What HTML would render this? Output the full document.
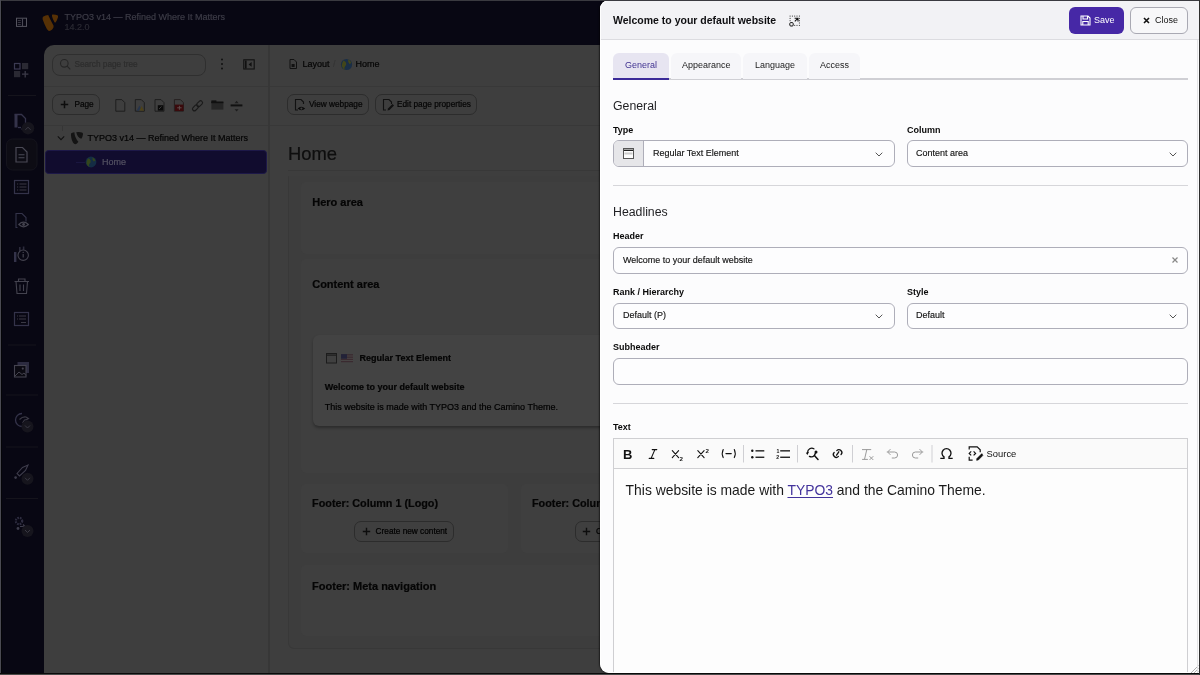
<!DOCTYPE html>
<html><head><meta charset="utf-8">
<style>
*{box-sizing:border-box;margin:0;padding:0}
html,body{width:1200px;height:675px;overflow:hidden}
#app,#modal{will-change:transform}
body{background:#47474d;font-family:"Liberation Sans",sans-serif;position:relative}
.a{position:absolute}
.t{position:absolute;white-space:nowrap;line-height:1}
#app{left:0;top:0;width:1200px;height:675px;background:#080713;overflow:hidden}
#content{left:44px;top:45px;width:1160px;height:640px;background:#3e3e3e;border-top-left-radius:10px}
.hl{position:absolute;height:1px;background:#383838}
.vl{position:absolute;width:1px;background:#373737}
.btnd{position:absolute;border:1px solid #2c2c2c;border-radius:7px}
.dk{color:#050505;-webkit-text-stroke:0.25px #050505}
#app .t{-webkit-text-stroke:0.2px currentColor}
#modal{left:600px;top:0;width:600px;height:673px;background:#fcfcfd;border-radius:9px 0 0 9px;overflow:hidden;box-shadow:-1px 0 1.5px rgba(0,0,0,0.55)}
#mhead{left:0;top:0;width:100%;height:40px;background:#f2f2f5;border-bottom:1px solid #dcdce0}
.lbl{position:absolute;font-weight:700;font-size:9.7px;line-height:1;color:#0a0a0a;white-space:nowrap;transform:scaleX(0.928);transform-origin:0 0;margin-top:-1.2px}
.inp{position:absolute;border:1px solid #aeaeb9;border-radius:6px;background:#fdfdfe}
.itx{position:absolute;font-size:9.7px;line-height:1;color:#111;white-space:nowrap;transform:scaleX(0.928);transform-origin:0 0;-webkit-text-stroke:0.15px #111;margin-top:-1.3px}
.sep{position:absolute;height:1px;background:#d6d6da}
.chev{position:absolute;width:6px;height:6px;border-right:1px solid #666;border-bottom:1px solid #666;transform:rotate(45deg)}
</style></head>
<body>
<div id="app" class="a">
  <div id="content" class="a"></div>
  <!-- topbar -->
  <svg class="a" style="left:0;top:0" width="44" height="675" viewBox="0 0 44 675">
    <g fill="none" stroke="#4a4955" stroke-width="1">
      <rect x="16.5" y="18.2" width="10" height="8.2" stroke="#55545f"/>
    </g>
    <path d="M22.5 18.5v8" stroke="#4a4955" stroke-width="1.1"/>
    <g fill="#3e3d48"><rect x="17.8" y="20" width="3" height="0.9"/><rect x="17.8" y="22" width="3" height="0.9"/><rect x="17.8" y="24" width="3" height="0.9"/></g>
    <!-- grid plus -->
    <rect x="14.5" y="63.5" width="5.5" height="5.5" fill="none" stroke="#3b3a52" stroke-width="1.2"/>
    <rect x="22" y="63" width="6.2" height="6.2" fill="#2a2933"/>
    <rect x="14" y="71" width="6.2" height="6.2" fill="#2a2933"/>
    <path d="M25.2 71v6.4M22 74.2h6.4" stroke="#3b3a48" stroke-width="1.3"/>
    <rect x="8" y="95" width="28" height="1" fill="#15141c"/>
    <!-- pages -->
    <path d="M14.5 114.5h7l4 4v10.5h-4" fill="none" stroke="#34334a" stroke-width="1.3"/>
    <rect x="14.5" y="114.5" width="3" height="13" fill="#34334a"/>
    <path d="M18 127.5h3" stroke="#34334a" stroke-width="1.3"/>
    <circle cx="28" cy="128.2" r="6.2" fill="#16151d"/>
    <path d="M25.4 129.8l2.6-2.6 2.6 2.6" fill="none" stroke="#3a3944" stroke-width="1"/>
    <rect x="6.5" y="139" width="30.5" height="31" rx="6" fill="#0d0c14" stroke="#15141d" stroke-width="1"/>
    <path d="M16 147.5h6.5l4.5 4.5v10h-11z" fill="none" stroke="#4a4955" stroke-width="1.2"/>
    <path d="M18.5 154.8h6M18.5 157.8h6" stroke="#4a4955" stroke-width="1.1"/>
    <!-- list -->
    <rect x="14.5" y="180.5" width="14" height="13" fill="none" stroke="#34334a" stroke-width="1.2"/>
    <path d="M17 184h1.2M19.5 184h7M17 187h1.2M19.5 187h7M17 190h1.2M19.5 190h7" stroke="#3a3944" stroke-width="1"/>
    <!-- page eye -->
    <path d="M17.5 227.5h-1.5v-14h6l4 4v4" fill="none" stroke="#34334a" stroke-width="1.1"/>
    <path d="M18.8 224.5q4.6-4.6 9.6 0q-4.8 4.6-9.6 0z" fill="none" stroke="#44434f" stroke-width="1.1"/>
    <circle cx="23.6" cy="224.5" r="1.4" fill="#44434f"/>
    <!-- info -->
    <rect x="14" y="252" width="2.4" height="10" fill="#34334a"/>
    <rect x="19" y="247" width="1.6" height="4" fill="#2c2b3c"/>
    <rect x="22.8" y="246.5" width="1.6" height="3.4" fill="#2c2b3c"/>
    <circle cx="23.2" cy="255.2" r="5.2" fill="none" stroke="#44434f" stroke-width="1.1"/>
    <path d="M23.2 254v3.5" stroke="#44434f" stroke-width="1.2"/><circle cx="23.2" cy="252.4" r="0.7" fill="#44434f"/>
    <!-- trash -->
    <path d="M14.5 281.5h14.5M18.5 281.5v-2.5h6.5v2.5M16 281.5l1 12h9.5l1-12M20 284.5v6.5M23.5 284.5v6.5" fill="none" stroke="#44434f" stroke-width="1.1"/>
    <!-- form -->
    <rect x="14.5" y="312.5" width="14" height="13" fill="none" stroke="#34334a" stroke-width="1.2"/>
    <path d="M17 316h1M19 316h7M17 319h1M19 319h7M21 322.5h5" stroke="#3a3944" stroke-width="1"/>
    <rect x="8" y="344.5" width="28" height="1" fill="#15141c"/>
    <!-- media -->
    <rect x="17.5" y="362" width="11.5" height="11" fill="#2c2b40"/>
    <rect x="14.5" y="365.5" width="11.5" height="11.5" fill="#0b0a12" stroke="#44434f" stroke-width="1.1"/>
    <path d="M15 376l4-4 3 2.5 2-1.5 2 2.5" fill="none" stroke="#44434f" stroke-width="1"/><circle cx="22.8" cy="368.6" r="1.1" fill="#44434f"/>
    <rect x="6" y="394.5" width="32" height="1" fill="#15141c"/>
    <!-- globe -->
    <path d="M22 413.5a6.5 6.5 0 1 0 0 13" fill="none" stroke="#34334a" stroke-width="1.3"/>
    <path d="M19.5 419.5q3-3 6.5-2.5l2.5 1.5q-2 1.5-4 1.5l-2 3" fill="none" stroke="#3a3944" stroke-width="1.2"/>
    <circle cx="27.5" cy="426.5" r="6" fill="#16151d"/>
    <path d="M25 425.5l2.5 2.5 2.5-2.5" fill="none" stroke="#3a3944" stroke-width="1"/>
    <rect x="6" y="446.5" width="32" height="1" fill="#15141c"/>
    <!-- rocket -->
    <path d="M17 473.5l5.5-6 5.5-2.5-2.5 5.5-6 5.5z" fill="none" stroke="#3e3d4c" stroke-width="1.1"/>
    <circle cx="15.6" cy="477.6" r="1.3" fill="#3e3d4c"/>
    <circle cx="27.5" cy="478.8" r="6" fill="#16151d"/>
    <path d="M25 477.8l2.5 2.5 2.5-2.5" fill="none" stroke="#3a3944" stroke-width="1"/>
    <rect x="6" y="498" width="32" height="1" fill="#15141c"/>
    <!-- gear -->
    <circle cx="19" cy="521" r="3.2" fill="none" stroke="#2e2d40" stroke-width="2.2" stroke-dasharray="1.6 1"/>
    <path d="M20 526.5h5M23 524.5l2 2" stroke="#3e3d4c" stroke-width="1.2"/>
    <circle cx="18" cy="528.5" r="1.4" fill="#3e3d4c"/>
    <circle cx="27.5" cy="531" r="6" fill="#16151d"/>
    <path d="M25 530l2.5 2.5 2.5-2.5" fill="none" stroke="#3a3944" stroke-width="1"/>
    
  </svg>
  <!-- logo -->
  <svg class="a" style="left:38px;top:10px" width="24" height="24" viewBox="38 10 24 24">
    <path d="M43.4 16.4Q45.5 15.3 48.2 15.1Q50.6 20.5 53.6 25.8Q54 27.4 52.2 29.6Q50.5 31.2 48.9 31Q47.6 30.6 46.6 28.6Q44.4 24.3 42.6 19.2Q42.3 17.2 43.4 16.4z" fill="#573105"/>
    <path d="M52.4 14.6Q55.2 14.4 57.4 15.2Q58.4 15.8 58 17.2Q57.2 20.2 55.6 22.4Q55 22.9 54.5 22.2Q52.8 19.6 52 16.2Q51.8 14.9 52.4 14.6z" fill="#573105"/>
  </svg>
  <div class="t" style="left:64.5px;top:12.6px;font-size:9px;color:#3d3c47">TYPO3 v14 — Refined Where It Matters</div>
  <div class="t" style="left:64.5px;top:23.4px;font-size:9px;color:#2b2a33">14.2.0</div>

  <!-- page tree -->
  <div class="a" style="left:52px;top:54px;width:153.6px;height:21.6px;border:1px solid #2f2f2f;border-radius:8px"></div>
  <svg class="a" style="left:59px;top:58px" width="14" height="14" viewBox="0 0 14 14"><circle cx="5.3" cy="5.3" r="3.8" fill="none" stroke="#262626" stroke-width="1.1"/><path d="M8.1 8.1L11.3 11.3" stroke="#262626" stroke-width="1.2"/></svg>
  <div class="t" style="left:74.4px;top:61.2px;font-size:8.25px;color:#2d2d2d">Search page tree</div>
  <svg class="a" style="left:218px;top:57px" width="8" height="14" viewBox="0 0 8 14"><circle cx="4" cy="2.6" r="1" fill="#111"/><circle cx="4" cy="7" r="1" fill="#111"/><circle cx="4" cy="11.4" r="1" fill="#111"/></svg>
  <svg class="a" style="left:243px;top:59px" width="12" height="11" viewBox="0 0 12 11"><rect x="0.8" y="0.8" width="10.4" height="9.2" fill="none" stroke="#111" stroke-width="1.1"/><rect x="2" y="1.5" width="1.6" height="8" fill="#111"/><path d="M8.6 3l-3 2.4 3 2.4z" fill="#111"/></svg>
  <div class="hl" style="left:44px;top:85.6px;width:224px"></div>
  <div class="btnd" style="left:52px;top:94.4px;width:48px;height:21px"></div>
  <svg class="a" style="left:60px;top:100px" width="9" height="9" viewBox="0 0 9 9"><path d="M4.5 0.8v7.4M0.8 4.5h7.4" stroke="#0d0d0d" stroke-width="1.5"/></svg>
  <div class="t dk" style="left:74.4px;top:101.2px;font-size:8.25px">Page</div>
  <svg class="a" style="left:110.6px;top:96.6px" width="135" height="17" viewBox="110 97 135 17">
    <path d="M114.8 99.6h6l3 3v8.6h-9z" fill="none" stroke="#1e1e1e" stroke-width="1"/>
    <path d="M134.3 99.6h6l3 3v8.6h-9z" fill="none" stroke="#1e1e1e" stroke-width="1"/>
    <path d="M135.6 110.8l2.8-5.4 2.8 5.4z" fill="#26344c"/><path d="M138.2 110.8l2.4-4.8 2.4 4.8z" fill="#4e4218"/>
    <path d="M154 99.6h6l3 3v8.6h-9z" fill="none" stroke="#1e1e1e" stroke-width="1"/>
    <rect x="156.8" y="105.2" width="5.6" height="5.4" fill="#0a0a0a"/><path d="M158 109l2.5-2.5" stroke="#3e3e3e" stroke-width="0.9"/>
    <path d="M173.4 99.6h6l3 3v8.6h-9z" fill="none" stroke="#262020" stroke-width="1"/>
    <rect x="173.9" y="104.6" width="8.6" height="6.4" fill="#3a0a0c"/>
    <path d="M176.2 107.8h4.4M178.4 105.8v4" stroke="#5e4c4c" stroke-width="1"/>
    <g fill="none" stroke="#1a1a1a" stroke-width="1.1" transform="rotate(-45 196.5 105.8)">
      <rect x="190.2" y="103.9" width="6.8" height="3.8" rx="1.9"/><rect x="196" y="103.9" width="6.8" height="3.8" rx="1.9"/>
    </g>
    <rect x="210.4" y="101" width="12" height="8.6" fill="#262626"/><rect x="210.4" y="100.4" width="5" height="2.4" fill="#101010"/><rect x="210.4" y="102" width="12" height="1.2" fill="#101010"/>
    <path d="M229.6 105.4h11.8" stroke="#111" stroke-width="2"/>
    <path d="M233.6 103.2l2 -2.4 2 2.4zM233.6 109.2l2 2.4 2-2.4z" fill="#1e1e1e"/>
  </svg>
  <div class="hl" style="left:44px;top:124.6px;width:224px"></div>
  <svg class="a" style="left:56px;top:133px" width="10" height="10" viewBox="0 0 10 10"><path d="M1.8 3.4L5 6.6 8.2 3.4" fill="none" stroke="#111" stroke-width="1.1"/></svg>
  <svg class="a" style="left:70px;top:130.6px" width="14" height="14" viewBox="0 0 14 14">
    <path d="M1 2.6Q2 1.4 4.4 1.2Q4.6 6.3 8.4 10.8Q7 12.9 5.5 13.2Q2.5 12.9 1.3 6.8Q0.8 3.8 1 2.6z" fill="#141414"/>
    <path d="M6.2 1.3Q9.3 0.8 12 1.5Q13.2 2 13 3.3Q12.8 5.6 11.3 7.8Q7.7 7 6.2 1.3z" fill="#141414"/>
  </svg>
  <div class="t dk" style="left:87.4px;top:134px;font-size:9px">TYPO3 v14 — Refined Where It Matters</div>
  <div class="a" style="left:45px;top:150px;width:222px;height:23.6px;background:#110c2e;border:1px solid #1d1848;border-radius:3.5px"></div>
  <div class="a" style="left:61.5px;top:126px;width:1px;height:5px;background:#353535"></div><div class="a" style="left:76px;top:161.5px;width:9px;height:1px;background:#1a1640"></div>
  <svg class="a" style="left:85px;top:155.5px" width="12" height="12" viewBox="0 0 12 12"><circle cx="6" cy="6" r="5.4" fill="#142c44"/><path d="M3 2.2q2 0.5 2.6 2.2t-1 3.4 0.6 3.4q-3-1-3.8-3.8 0-2.4 1.6-5.2zM7.4 1.2q2.6 1.4 3 3.4l-1.6 1q-1.6-1.8-1.4-4.4z" fill="#34461c"/></svg>
  <div class="t" style="left:102px;top:157.6px;font-size:9px;color:#545262">Home</div>

  <!-- main -->
  <div class="a" style="left:268.3px;top:45px;width:1.4px;height:630px;background:#373737"></div>
  <svg class="a" style="left:288px;top:58px" width="10" height="12" viewBox="0 0 10 12"><path d="M2 1.5h4l2.5 2.5v6.5H2z" fill="none" stroke="#111" stroke-width="1"/><rect x="3.6" y="6" width="3" height="3" fill="#111"/></svg>
  <div class="t dk" style="left:302.4px;top:59.6px;font-size:9px">Layout</div>
  <div class="t" style="left:333px;top:59.6px;font-size:9px;color:#353535">/</div>
  <svg class="a" style="left:340px;top:57.5px" width="13" height="13" viewBox="0 0 13 13"><circle cx="6.5" cy="6.5" r="5.6" fill="#1a2e46"/><path d="M3.4 2.4q2 0.6 2.7 2.4t-1 3.6 0.6 3.5q-3.1-1-4-4 0-2.6 1.7-5.5zM8 1.3q2.8 1.4 3.2 3.6l-1.7 1q-1.7-1.9-1.5-4.6z" fill="#42461a"/></svg>
  <div class="t dk" style="left:355.4px;top:59.6px;font-size:9px">Home</div>
  <div class="hl" style="left:270px;top:85.6px;width:340px"></div>
  <div class="btnd" style="left:287.4px;top:94.4px;width:81.2px;height:21px"></div>
  <svg class="a" style="left:294px;top:98px" width="13" height="14" viewBox="0 0 13 14"><path d="M4 12H1.5V1.5h5.5l2.5 2.5v2" fill="none" stroke="#111" stroke-width="1.1"/><path d="M3.6 10.6q3.4-3.6 7.6 0q-3.8 3.4-7.6 0z" fill="#0a0a0a"/><circle cx="7.4" cy="10.6" r="1.1" fill="#3e3e3e"/></svg>
  <div class="t dk" style="left:309px;top:100.7px;font-size:8.25px">View webpage</div>
  <div class="btnd" style="left:375.4px;top:94.4px;width:101.2px;height:21px"></div>
  <svg class="a" style="left:382px;top:98px" width="13" height="14" viewBox="0 0 13 14"><path d="M4 12H1.5V1.5h5.5l2.5 2.5v2" fill="none" stroke="#111" stroke-width="1.1"/><path d="M5.5 12.5l0.5-2 4.5-4.5 1.5 1.5-4.5 4.5z" fill="#111"/></svg>
  <div class="t dk" style="left:397px;top:100.7px;font-size:8.25px">Edit page properties</div>
  <div class="hl" style="left:270px;top:124.6px;width:340px"></div>
  <div class="t dk" style="left:288px;top:145px;font-size:18.4px;color:#0e0e0e">Home</div>
  <div class="hl" style="left:288px;top:170px;width:320px"></div>
  <div class="a" style="left:287.5px;top:176px;width:400px;height:473px;background:#3d3d3d;border:1px solid #383838;border-top-color:transparent;border-radius:0 0 6px 6px"></div>
  <div class="a" style="left:300.5px;top:181.5px;width:400px;height:72.5px;background:#3f3f3f;border-radius:5px"></div>
  <div class="t dk" style="left:312.2px;top:196.9px;font-size:11px;font-weight:700">Hero area</div>
  <div class="a" style="left:300.5px;top:258.5px;width:400px;height:214px;background:#3f3f3f;border-radius:5px"></div>
  <div class="t dk" style="left:312.2px;top:278.8px;font-size:11px;font-weight:700">Content area</div>
  <div class="a" style="left:312.6px;top:335px;width:400px;height:91px;background:#434343;border-radius:6px;box-shadow:0 2px 3px rgba(0,0,0,0.3)"></div>
  <svg class="a" style="left:325px;top:352px" width="30" height="12" viewBox="0 0 30 12"><rect x="1.5" y="1.5" width="10" height="9.5" fill="#404040" stroke="#1c1c1c" stroke-width="1"/><rect x="2" y="2.5" width="9" height="1.2" fill="#1c1c1c"/>
   <rect x="16" y="2.2" width="12" height="8" fill="#3a2a30"/><rect x="16" y="3.5" width="12" height="1" fill="#484444"/><rect x="16" y="5.8" width="12" height="1" fill="#484444"/><rect x="16" y="8" width="12" height="1" fill="#484444"/><rect x="16" y="2.2" width="6" height="4.5" fill="#222238"/></svg>
  <div class="t dk" style="left:359.6px;top:353.6px;font-size:9px;font-weight:700">Regular Text Element</div>
  <div class="t dk" style="left:324.7px;top:382.6px;font-size:9px;font-weight:700">Welcome to your default website</div>
  <div class="t" style="left:324.7px;top:402.6px;font-size:9px;color:#000">This website is made with TYPO3 and the Camino Theme.</div>
  <div class="a" style="left:300.8px;top:484px;width:207px;height:69px;background:#3f3f3f;border-radius:5px"></div>
  <div class="t dk" style="left:312.1px;top:497.8px;font-size:10.8px;font-weight:700">Footer: Column 1 (Logo)</div>
  <div class="btnd" style="left:354.4px;top:520.5px;width:99.4px;height:21.1px"></div>
  <svg class="a" style="left:362px;top:526.5px" width="9" height="9" viewBox="0 0 9 9"><path d="M4.5 0.8v7.4M0.8 4.5h7.4" stroke="#0d0d0d" stroke-width="1.4"/></svg>
  <div class="t" style="left:375.6px;top:528.2px;font-size:8.25px;color:#000">Create new content</div>
  <div class="a" style="left:520.6px;top:484px;width:207px;height:69px;background:#3f3f3f;border-radius:5px"></div>
  <div class="t dk" style="left:532px;top:497.8px;font-size:10.8px;font-weight:700">Footer: Column 2</div>
  <div class="btnd" style="left:574.7px;top:520.5px;width:99.4px;height:21.1px"></div>
  <svg class="a" style="left:582.3px;top:526.5px" width="9" height="9" viewBox="0 0 9 9"><path d="M4.5 0.8v7.4M0.8 4.5h7.4" stroke="#0d0d0d" stroke-width="1.4"/></svg>
  <div class="t" style="left:595.9px;top:528.2px;font-size:8.25px;color:#000">Create new content</div>
  <div class="a" style="left:301px;top:565.4px;width:400px;height:70.6px;background:#3f3f3f;border-radius:5px"></div>
  <div class="t dk" style="left:312.1px;top:580.8px;font-size:11px;font-weight:700">Footer: Meta navigation</div>
</div>
<div id="modal" class="a">
  <div id="mhead" class="a"></div>
  <div class="t" style="left:13px;top:15.1px;font-size:10.5px;font-weight:700;color:#0f0f12">Welcome to your default website</div>
  <svg class="a" style="left:189px;top:14.5px" width="12" height="12" viewBox="0 0 12 12">
    <g fill="#333">
      <rect x="0.6" y="0.6" width="1" height="1"/><rect x="2.9" y="0.6" width="1" height="1"/><rect x="5.2" y="0.6" width="1" height="1"/><rect x="7.5" y="0.6" width="1" height="1"/><rect x="9.9" y="0.6" width="1" height="1"/>
      <rect x="0.6" y="2.9" width="1" height="1"/><rect x="0.6" y="5.2" width="1" height="1"/>
      <rect x="9.9" y="2.9" width="1" height="1"/><rect x="9.9" y="5.2" width="1" height="1"/><rect x="9.9" y="7.5" width="1" height="1"/><rect x="9.9" y="9.9" width="1" height="1"/>
      <rect x="5.2" y="9.9" width="1" height="1"/><rect x="7.5" y="9.9" width="1" height="1"/>
    </g>
    <path d="M5.6 3.2h3.4v3.4M9 3.2L5.8 6.4" fill="none" stroke="#111" stroke-width="1.1"/>
    <rect x="0.8" y="7.6" width="3.4" height="3.4" rx="1" fill="none" stroke="#111" stroke-width="1"/>
  </svg>
  <div class="a" style="left:469px;top:7px;width:55px;height:27px;background:#4628a6;border-radius:6px"></div>
  <svg class="a" style="left:479.5px;top:15px" width="11" height="11" viewBox="0 0 11 11"><path d="M1 1h7l2 2v7H1z M3 1v3h4.5V1 M2.8 10V6.5h5.4V10" fill="none" stroke="#fff" stroke-width="1.1"/></svg>
  <div class="t" style="left:494px;top:14.9px;font-size:9.7px;color:#fff;transform:scaleX(0.928);transform-origin:0 0">Save</div>
  <div class="a" style="left:530px;top:7px;width:58px;height:27px;background:#f7f7f9;border:1px solid #a9a9b3;border-radius:6px"></div>
  <svg class="a" style="left:542.5px;top:17px" width="7" height="7" viewBox="0 0 7 7"><path d="M1 1L6 6M6 1L1 6" stroke="#111" stroke-width="1.6"/></svg>
  <div class="t" style="left:555.4px;top:14.9px;font-size:9.7px;color:#111;transform:scaleX(0.928);transform-origin:0 0">Close</div>

  <!-- tabs -->
  <div class="a" style="left:13px;top:78px;width:575px;height:1.5px;background:#cfcfd4"></div>
  <div class="a" style="left:13px;top:53px;width:56px;height:26.5px;background:#e7e5f1;border-radius:6px 6px 0 0;border-bottom:2px solid #3b2a98"></div>
  <div class="t" style="left:24.5px;top:59.9px;font-size:9.7px;color:#3f3190;transform:scaleX(0.928);transform-origin:0 0">General</div>
  <div class="a" style="left:71px;top:53px;width:70px;height:25.5px;background:#f6f6f9;border-radius:6px 6px 0 0"></div>
  <div class="t" style="left:81.75px;top:59.9px;font-size:9.7px;color:#1b1b1b;transform:scaleX(0.928);transform-origin:0 0">Appearance</div>
  <div class="a" style="left:143px;top:53px;width:64px;height:25.5px;background:#f6f6f9;border-radius:6px 6px 0 0"></div>
  <div class="t" style="left:154.5px;top:59.9px;font-size:9.7px;color:#1b1b1b;transform:scaleX(0.928);transform-origin:0 0">Language</div>
  <div class="a" style="left:209px;top:53px;width:51px;height:25.5px;background:#f6f6f9;border-radius:6px 6px 0 0"></div>
  <div class="t" style="left:219.5px;top:59.9px;font-size:9.7px;color:#1b1b1b;transform:scaleX(0.928);transform-origin:0 0">Access</div>

  <div class="t" style="left:13px;top:99.6px;font-size:12.3px;color:#1f1f22">General</div>
  <div class="lbl" style="left:13px;top:126.6px">Type</div>
  <div class="lbl" style="left:307px;top:126.6px">Column</div>
  <div class="inp" style="left:13px;top:140px;width:282px;height:27px;overflow:hidden"><div class="a" style="left:0;top:0;width:30px;height:25px;background:#e6e6e9;border-right:1px solid #aeaeb9"></div></div>
  <svg class="a" style="left:23px;top:148px" width="11" height="11" viewBox="0 0 11 11"><rect x="0.5" y="0.5" width="10" height="10" fill="#fdfdfd" stroke="#555" stroke-width="1"/><rect x="1" y="1.6" width="9" height="1.4" fill="#222"/><rect x="1.5" y="4.5" width="8" height="2" fill="#ccc"/></svg>
  <div class="itx" style="left:53px;top:149.1px">Regular Text Element</div>
  <svg class="a" style="left:275px;top:151.5px" width="8" height="5" viewBox="0 0 8 5"><path d="M0.7 0.7L4 4L7.3 0.7" fill="none" stroke="#555" stroke-width="1"/></svg>
  <div class="inp" style="left:307px;top:140px;width:281px;height:27px"></div>
  <div class="itx" style="left:316px;top:149.1px">Content area</div>
  <svg class="a" style="left:568.5px;top:151.5px" width="8" height="5" viewBox="0 0 8 5"><path d="M0.7 0.7L4 4L7.3 0.7" fill="none" stroke="#555" stroke-width="1"/></svg>
  <div class="sep" style="left:13px;top:185px;width:575px"></div>

  <div class="t" style="left:13px;top:205.8px;font-size:12.3px;color:#1f1f22">Headlines</div>
  <div class="lbl" style="left:13px;top:232.4px">Header</div>
  <div class="inp" style="left:13px;top:247px;width:575px;height:26.5px"></div>
  <div class="itx" style="left:22.5px;top:255.8px">Welcome to your default website</div>
  <svg class="a" style="left:572px;top:257px" width="6" height="6" viewBox="0 0 6 6"><path d="M0.5 0.5L5.5 5.5M5.5 0.5L0.5 5.5" stroke="#888" stroke-width="1.2"/></svg>
  <div class="lbl" style="left:13px;top:287.9px">Rank / Hierarchy</div>
  <div class="lbl" style="left:306.5px;top:287.9px">Style</div>
  <div class="inp" style="left:13px;top:302.5px;width:282px;height:26.5px"></div>
  <div class="itx" style="left:22.5px;top:311.4px">Default (P)</div>
  <svg class="a" style="left:275px;top:313.5px" width="8" height="5" viewBox="0 0 8 5"><path d="M0.7 0.7L4 4L7.3 0.7" fill="none" stroke="#555" stroke-width="1"/></svg>
  <div class="inp" style="left:307px;top:302.5px;width:281px;height:26.5px"></div>
  <div class="itx" style="left:316px;top:311.4px">Default</div>
  <svg class="a" style="left:568.5px;top:313.5px" width="8" height="5" viewBox="0 0 8 5"><path d="M0.7 0.7L4 4L7.3 0.7" fill="none" stroke="#555" stroke-width="1"/></svg>
  <div class="lbl" style="left:13px;top:342.9px">Subheader</div>
  <div class="inp" style="left:13px;top:358px;width:575px;height:26.5px"></div>
  <div class="sep" style="left:13px;top:403px;width:575px"></div>
  <div class="lbl" style="left:13px;top:423.6px">Text</div>

  <!-- editor -->
  <div class="a" style="left:13px;top:438px;width:575px;height:260px;border:1px solid #cfcfd2;background:#fdfdfd"></div>
  <div class="a" style="left:14px;top:439px;width:573px;height:29.5px;background:#fafafa;border-bottom:1px solid #d0d0d3"></div>
  <svg class="a" style="left:0;top:0" width="600" height="675" viewBox="600 0 600 675">
  <text x="623" y="458.6" font-family="Liberation Sans" font-weight="700" font-size="13" fill="#111">B</text>
  <g stroke="#111" stroke-width="1.1" fill="none" stroke-linecap="round">
    <path d="M652.2 449.6h4.6M649.2 458.4h4.6M654.9 449.6L651.1 458.4"/>
    <path d="M672.3 450.6L678.6 457.6M678.6 450.6L672.3 457.6"/>
    <path d="M697.8 450.6L704.1 457.6M704.1 450.6L697.8 457.6"/>
    <path d="M723.2 449.5Q721.3 453.5 723.2 457.6M734.3 449.5Q736.2 453.5 734.3 457.6"/>
    <path d="M726 453.6h5.2" stroke-width="1.3"/>
  </g>
  <text x="679.6" y="460.7" font-family="Liberation Sans" font-weight="700" font-size="6.2" fill="#111">2</text>
  <text x="705.6" y="453.2" font-family="Liberation Sans" font-weight="700" font-size="6.2" fill="#111">2</text>
  <g fill="#cfcfd3"><rect x="743" y="445" width="1" height="17.5"/><rect x="797" y="445" width="1" height="17.5"/><rect x="852" y="445" width="1" height="17.5"/><rect x="931.5" y="445" width="1" height="17.5"/></g>
  <g fill="#111">
    <circle cx="752.3" cy="450.8" r="1.2"/><circle cx="752.3" cy="457.2" r="1.2"/>
    <rect x="755.5" y="450.2" width="8.8" height="1.3"/><rect x="755.5" y="456.6" width="8.8" height="1.3"/>
    <rect x="780.2" y="450.2" width="9.8" height="1.3"/><rect x="780.2" y="456.6" width="9.8" height="1.3"/>
  </g>
  <text x="776.4" y="452.6" font-family="Liberation Sans" font-weight="700" font-size="5.2" fill="#111">1</text>
  <text x="776.2" y="459.2" font-family="Liberation Sans" font-weight="700" font-size="5.2" fill="#111">2</text>
  <g fill="none" stroke="#111" stroke-width="1.3" stroke-linecap="round">
    <path d="M813.9 448.8A4.2 4.2 0 0 0 807.6 452.4"/>
    <path d="M809.4 456.4A4.2 4.2 0 0 0 814.3 455.6"/>
    <path d="M814.4 455.6L818 459.4" stroke-width="1.5"/>
    <path d="M836.8 450.6A2.8 2.8 0 1 1 841 454.6"/>
    <path d="M838.4 456.4A2.8 2.8 0 1 1 834.2 452.4"/>
    <path d="M836.6 455.2L838.8 451.8"/>
  </g>
  <path d="M805.8 452.8l3.2-0.9-1.6 3z" fill="#111"/>
  <circle cx="816" cy="452" r="1.5" fill="#111"/>
  <path d="M816 452L814.3 455.6" stroke="#111" stroke-width="1.4"/>
  <g fill="none" stroke="#9a9a9a" stroke-width="1" stroke-linecap="round">
    <path d="M862.4 449.6h8.4M866.8 449.6L864.6 459M862.5 459.4h5"/>
    <path d="M869.8 456.5l3.2 3.2M873 456.5l-3.2 3.2"/>
    <path d="M888 452h6.6a3 3 0 0 1 0 6h-2.4M887.6 452l2.6-2.6M887.6 452l2.6 2.6"/>
    <path d="M922 452h-6.6a3 3 0 0 0 0 6h2.4M922.4 452l-2.6-2.6M922.4 452l-2.6 2.6"/>
  </g>
  <path d="M940.3 458.3H944V456.9A4.5 4.5 0 1 1 949 456.9V458.3H952.7" fill="none" stroke="#111" stroke-width="1.35"/>
  <g fill="none" stroke="#111" stroke-width="1.2">
    <path d="M969.2 449.6V446.8H977.2L980.2 449.8V452.2"/>
    <path d="M969.2 456.8V460.1H972.6"/>
    <path d="M971.2 451.4L969.2 453.4 971.2 455.4M973.6 451.4L975.6 453.4 973.6 455.4"/>
  </g>
  <path d="M976.6 460.3L976.9 458.6 981.4 454.1 982.8 455.5 978.3 460z" fill="#111" stroke="#111" stroke-width="0.6"/>
  <circle cx="981.8" cy="454.4" r="0.9" fill="#111"/>
  <text x="986.6" y="457.3" font-family="Liberation Sans" font-size="9.4" fill="#111">Source</text>
</svg>
  <div class="t" style="left:25.6px;top:484.2px;font-size:13.9px;color:#1a1a1a">This website is made with <span style="color:#43339c;text-decoration:underline;text-underline-offset:1.5px">TYPO3</span> and the Camino Theme.</div>
  <div class="a" style="left:0;top:0;width:600px;height:673px;border:1px solid rgba(255,255,255,0.9);border-right:0;border-radius:9px 0 0 9px"></div>
</div>
<svg class="a" style="left:1189px;top:664px" width="10" height="10" viewBox="0 0 10 10"><path d="M9.5 1.5L1.5 9.5M9.5 4.5L4.5 9.5M9.5 7.5L7.5 9.5" stroke="#9a9a9a" stroke-width="0.8"/></svg>
<div class="a" style="left:0;top:0;width:1200px;height:1px;background:#3a3a40"></div>
<div class="a" style="left:0;top:0;width:1px;height:675px;background:#4a4a52"></div>
<div class="a" style="left:1px;top:1px;width:1px;height:673px;background:#050508"></div>
<div class="a" style="left:0;top:673px;width:1200px;height:1px;background:#0a0a0a"></div>
<div class="a" style="left:0;top:674px;width:1200px;height:1px;background:#4a4a4a"></div>
<div class="a" style="left:1197px;top:40px;width:1px;height:633px;background:#e4e4e6"></div>
<div class="a" style="left:1198.6px;top:0;width:1.4px;height:675px;background:#2e2e2e"></div>
</body></html>
